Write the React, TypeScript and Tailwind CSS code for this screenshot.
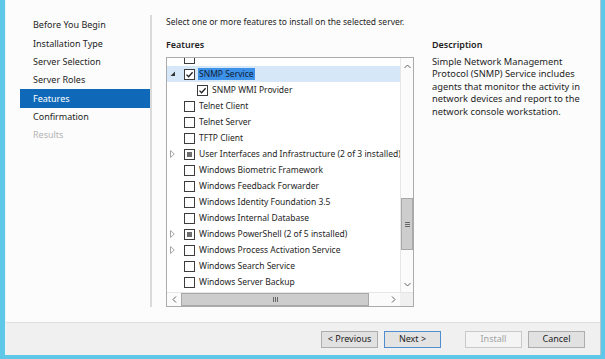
import React from "react";

type Check = "on" | "off" | "part";

interface Feature {
  label: string;
  level: number;
  check: Check;
  arrow?: "open" | "closed";
  selected?: boolean;
}

const steps = [
  "Before You Begin",
  "Installation Type",
  "Server Selection",
  "Server Roles",
  "Features",
  "Confirmation",
  "Results",
];

const features: Feature[] = [
  { label: "SNMP Service", level: 0, check: "on", arrow: "open", selected: true },
  { label: "SNMP WMI Provider", level: 1, check: "on" },
  { label: "Telnet Client", level: 0, check: "off" },
  { label: "Telnet Server", level: 0, check: "off" },
  { label: "TFTP Client", level: 0, check: "off" },
  { label: "User Interfaces and Infrastructure (2 of 3 installed)", level: 0, check: "part", arrow: "closed" },
  { label: "Windows Biometric Framework", level: 0, check: "off" },
  { label: "Windows Feedback Forwarder", level: 0, check: "off" },
  { label: "Windows Identity Foundation 3.5", level: 0, check: "off" },
  { label: "Windows Internal Database", level: 0, check: "off" },
  { label: "Windows PowerShell (2 of 5 installed)", level: 0, check: "part", arrow: "closed" },
  { label: "Windows Process Activation Service", level: 0, check: "off", arrow: "closed" },
  { label: "Windows Search Service", level: 0, check: "off" },
  { label: "Windows Server Backup", level: 0, check: "off" },
];

const descLines = [
  "Simple Network Management",
  "Protocol (SNMP) Service includes",
  "agents that monitor the activity in",
  "network devices and report to the",
  "network console workstation.",
];

const font = { fontFamily: '"Segoe UI", "Noto Sans", sans-serif' };

const CheckBox = ({ check }: { check: Check }) => (
  <span className="w-[11px] h-[11px] border border-[#3c3c3c] bg-white flex items-center justify-center shrink-0">
    {check === "on" && (
      <svg width="9" height="9" viewBox="0 0 9 9">
        <path d="M1.5 4.6 L3.6 6.7 L7.6 2.2" fill="none" stroke="#1f1f1f" strokeWidth="1.3" />
      </svg>
    )}
    {check === "part" && <span className="w-[5px] h-[5px] bg-[#6e6e6e]" />}
  </span>
);

const Arrow = ({ kind }: { kind?: "open" | "closed" }) => {
  if (kind === "open")
    return (
      <svg width="6" height="6" viewBox="0 0 6 6">
        <polygon points="5,0.5 5,5 0.5,5" fill="#333" />
      </svg>
    );
  if (kind === "closed")
    return (
      <svg width="5" height="8" viewBox="0 0 5 8">
        <polygon points="0.5,0.5 4.3,4 0.5,7.5" fill="none" stroke="#a6a6a6" strokeWidth="1" />
      </svg>
    );
  return null;
};

const Chevron = ({ dir }: { dir: "up" | "down" | "left" | "right" }) => {
  const pts = {
    up: "0.5,4 3.5,1 6.5,4",
    down: "0.5,1 3.5,4 6.5,1",
    left: "4,0.5 1,3.5 4,6.5",
    right: "1,0.5 4,3.5 1,6.5",
  }[dir];
  const vertical = dir === "up" || dir === "down";
  return (
    <svg width={vertical ? 7 : 5} height={vertical ? 5 : 7} viewBox={vertical ? "0 0 7 5" : "0 0 5 7"}>
      <polyline points={pts} fill="none" stroke="#606060" strokeWidth="1" />
    </svg>
  );
};

const Button = ({ label, primary, disabled }: { label: string; primary?: boolean; disabled?: boolean }) => (
  <div
    className={`w-[57px] h-[17px] flex items-center justify-center text-[9px] border ${
      disabled
        ? "border-[#c9c9c9] bg-[#f4f4f4] text-[#a3a3a3]"
        : primary
        ? "border-[#4f8fd0] bg-[#e3e3e3] text-[#1e1e1e]"
        : "border-[#adadad] bg-[#e1e1e1] text-[#1e1e1e]"
    }`}
  >
    {label}
  </div>
);

export default function App() {
  return (
    <div className="w-[605px] h-[359px] bg-[#5fc7e8] pl-[5px] pr-[6px] pb-[4px] flex" style={font}>
      <div className="flex-1 flex flex-col bg-[#fcfcfc] border-l border-[#e9f6fb] border-r border-r-[#b9c6cc]">
        <div className="flex-1 flex">
          {/* steps */}
          <div className="w-[144px] pl-[14px] pt-[16px]">
            {steps.map((s) => (
              <div
                key={s}
                className={`h-[18.33px] pl-[13px] flex items-center text-[9px] ${
                  s === "Features"
                    ? "bg-[#0f69b8] text-white"
                    : s === "Results"
                    ? "text-[#b4b4b4]"
                    : "text-[#1e1e1e]"
                }`}
              >
                {s}
              </div>
            ))}
          </div>
          <div className="w-[2px] mt-[15px] h-[292px] bg-[#dadada]" />

          {/* content */}
          <div className="flex-1 pl-[14px] pt-[15px] text-[#1e1e1e]">
            <div className="h-[13px] leading-[13px] text-[8.5px]">
              Select one or more features to install on the selected server.
            </div>
            <div className="flex gap-[18px] mt-[10px]">
              <div className="w-[248px]">
                <div className="h-[13px] leading-[13px] text-[9px] font-semibold">Features</div>
                <div className="mt-[6px] w-[248px] h-[250px] border border-[#ababab] bg-white flex flex-col">
                  <div className="flex-1 flex min-h-0">
                    <div className="flex-1 overflow-hidden">
                      <div className="-mt-[8px]">
                        <div className="h-[16px] flex items-center pl-[17px]">
                          <CheckBox check="off" />
                        </div>
                        {features.map((f) => (
                          <div
                            key={f.label}
                            className={`h-[16px] flex items-center text-[8.5px] whitespace-nowrap ${
                              f.selected ? "bg-[#d6e8f8]" : ""
                            }`}
                          >
                            <div className="w-[17px] pl-[3px] flex items-center shrink-0">
                              <Arrow kind={f.arrow} />
                            </div>
                            {f.level > 0 && <div className="w-[13px] shrink-0" />}
                            <CheckBox check={f.check} />
                            <span
                              className={`leading-[12px] ${
                                f.selected ? "bg-[#3d91e8] text-[#0f2035] ml-[3px] px-[1px]" : "ml-[4px]"
                              }`}
                            >
                              {f.label}
                            </span>
                          </div>
                        ))}
                      </div>
                    </div>
                    {/* vertical scrollbar */}
                    <div className="w-[13px] flex flex-col bg-[#fbfbfb] border-l border-[#e6e6e6]">
                      <div className="h-[16px] flex items-center justify-center">
                        <Chevron dir="up" />
                      </div>
                      <div className="h-[124px]" />
                      <div className="h-[52px] bg-[#cdcdcd] border border-[#a9a9a9] flex flex-col items-center justify-center gap-[1px]">
                        <span className="w-[5px] h-px bg-[#666]" />
                        <span className="w-[5px] h-px bg-[#666]" />
                        <span className="w-[5px] h-px bg-[#666]" />
                      </div>
                      <div className="flex-1" />
                      <div className="h-[16px] flex items-center justify-center">
                        <Chevron dir="down" />
                      </div>
                    </div>
                  </div>
                  {/* horizontal scrollbar */}
                  <div className="h-[14px] flex border-t border-[#e6e6e6] bg-[#fbfbfb]">
                    <div className="w-[14px] flex items-center justify-center">
                      <Chevron dir="left" />
                    </div>
                    <div className="w-[188px] bg-[#cdcdcd] border border-[#a9a9a9] flex items-center justify-center gap-[1px]">
                      <span className="w-px h-[5px] bg-[#666]" />
                      <span className="w-px h-[5px] bg-[#666]" />
                      <span className="w-px h-[5px] bg-[#666]" />
                    </div>
                    <div className="flex-1" />
                    <div className="w-[14px] flex items-center justify-center">
                      <Chevron dir="right" />
                    </div>
                    <div className="w-[13px] bg-[#f0f0f0]" />
                  </div>
                </div>
              </div>

              <div className="w-[168px]">
                <div className="h-[13px] leading-[13px] text-[9px] font-semibold">Description</div>
                <div className="mt-[5px] text-[9.3px]">
                  {descLines.map((l) => (
                    <div key={l} className="h-[12.4px] leading-[12.4px] whitespace-nowrap">
                      {l}
                    </div>
                  ))}
                </div>
              </div>
            </div>
          </div>
        </div>

        {/* footer */}
        <div className="h-[33px] bg-[#f0f0f0] border-t border-[#dedede] flex items-center justify-end pr-[15px]">
          <div className="flex gap-[6px]">
            <Button label="< Previous" />
            <Button label="Next >" primary />
          </div>
          <div className="flex gap-[6px] ml-[24px]">
            <Button label="Install" disabled />
            <Button label="Cancel" />
          </div>
        </div>
      </div>
    </div>
  );
}
